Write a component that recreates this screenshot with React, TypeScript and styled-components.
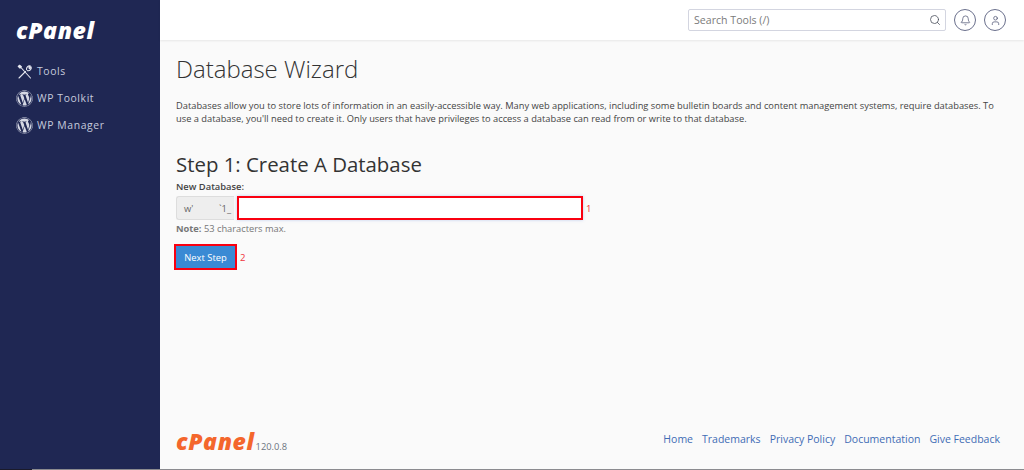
import styled, { createGlobalStyle } from "styled-components";
import { FaWordpress } from "react-icons/fa";
import { Search, Bell, User } from "lucide-react";

const GlobalStyle = createGlobalStyle`
  html, body {
    margin: 0;
    padding: 0;
    height: 100%;
    overflow: hidden;
  }
  body {
    font-family: "Open Sans", "Liberation Sans", sans-serif;
    color: #333;
  }
`;

const Page = styled.div`
  width: 1024px;
  height: 470px;
  display: flex;
  flex-direction: column;
`;
const Shell = styled.div`
  flex: 1;
  min-height: 0;
  display: flex;
`;
const ScrollBar = styled.div`
  height: 1px;
  display: flex;
  background: #8b8b8f;
  &::before {
    content: "";
    width: 32px;
    background: #1a1a2a;
  }
`;
const Sidebar = styled.nav`
  width: 160px;
  flex: none;
  background: #1f2753;
  padding: 18px 0 0 16px;
  box-sizing: border-box;
`;
const Logo = styled.div<{ $color: string }>`
  font-family: "Open Sans", sans-serif;
  font-style: italic;
  font-weight: 800;
  font-size: 23px;
  line-height: 24px;
  letter-spacing: 0.6px;
  color: ${(p) => p.$color};
`;
const NavList = styled.ul`
  list-style: none;
  margin: 19px 0 0;
  padding: 0;
  display: flex;
  flex-direction: column;
  gap: 7px;
`;
const NavItem = styled.li`
  display: flex;
  align-items: center;
  gap: 4px;
  height: 20px;
  font-size: 10.4px;
  letter-spacing: 0.6px;
  color: #c6cbdd;
  svg {
    flex: none;
  }
`;
const Main = styled.div`
  flex: 1;
  min-width: 0;
  display: flex;
  flex-direction: column;
  background: #fafafa;
`;
const Header = styled.header`
  height: 40px;
  flex: none;
  box-sizing: border-box;
  background: #fff;
  box-shadow: 0 1px 2px rgba(0, 0, 0, 0.08);
  display: flex;
  align-items: center;
  justify-content: flex-end;
  padding: 0 18px 0 0;
  gap: 8px;
`;
const SearchBox = styled.div`
  width: 258px;
  height: 22px;
  box-sizing: border-box;
  border: 1px solid #d3d5e0;
  border-radius: 2px;
  display: flex;
  align-items: center;
  justify-content: space-between;
  padding: 0 4px 0 5px;
  font-size: 10.6px;
  color: #7b7b7b;
  background: #fff;
  svg {
    color: #4a4f5c;
  }
`;
const RoundButton = styled.div`
  width: 22px;
  height: 22px;
  box-sizing: border-box;
  border: 1px solid #6a6f8c;
  border-radius: 50%;
  display: flex;
  align-items: center;
  justify-content: center;
  color: #4c5170;
`;
const Content = styled.main`
  flex: 1;
  min-height: 0;
  display: flex;
  flex-direction: column;
  padding: 13px 24px 0 16px;
`;
const PageTitle = styled.h1`
  margin: 0;
  font-size: 24px;
  line-height: 32px;
  font-weight: 300;
  color: #333;
`;
const Intro = styled.p`
  margin: 14px 0 0;
  font-size: 9.3px;
  line-height: 13px;
  color: #444;
`;
const StepTitle = styled.h2`
  margin: 26px 0 0;
  font-size: 20.4px;
  line-height: 26px;
  font-weight: 400;
  color: #333;
`;
const FieldLabel = styled.label`
  display: block;
  margin-top: 3px;
  font-size: 9.4px;
  line-height: 13px;
  font-weight: 600;
  color: #444;
`;
const FieldRow = styled.div`
  display: flex;
  align-items: center;
  margin-top: 3px;
`;
const Prefix = styled.div`
  width: 58px;
  height: 24px;
  box-sizing: border-box;
  background: #eee;
  border: 1px solid #ddd;
  border-right: 0;
  border-radius: 3px 0 0 3px;
  display: flex;
  justify-content: space-between;
  align-items: center;
  padding: 0 3px 0 7px;
  font-size: 9.4px;
  color: #666;
`;
const Callout = styled.div`
  border: 2px solid #fa0010;
  box-sizing: border-box;
  box-shadow: 0 0 3px rgba(90, 130, 220, 0.35);
`;
const NameInput = styled(Callout)`
  width: 346px;
  height: 24px;
  margin-left: 3px;
  background: #fff;
`;
const Marker = styled.span`
  margin-left: 3px;
  font-size: 9.6px;
  color: #f0333c;
`;
const Note = styled.div`
  margin-top: 2px;
  font-size: 9.3px;
  line-height: 13px;
  color: #777;
  b {
    font-weight: 700;
  }
`;
const ActionRow = styled.div`
  display: flex;
  align-items: center;
  margin: 9px 0 0 -2px;
`;
const NextButton = styled(Callout)`
  width: 63px;
  height: 26px;
  background: #3a8ad4;
  color: #fff;
  font-size: 9.4px;
  display: flex;
  align-items: center;
  justify-content: center;
  box-shadow: none;
`;
const Footer = styled.footer`
  margin-top: auto;
  height: 37px;
  display: flex;
  justify-content: space-between;
  align-items: flex-start;
`;
const Brand = styled.div`
  display: flex;
  align-items: flex-end;
  gap: 1px;
  margin-top: -3px;
`;
const Version = styled.span`
  font-size: 9.3px;
  line-height: 13px;
  color: #6b7480;
`;
const FooterLinks = styled.div`
  display: flex;
  gap: 9px;
  font-size: 10.5px;
  line-height: 15px;
  color: #3f6cb5;
`;

const ToolsIcon = () => (
  <svg width="17" height="17" viewBox="0 0 17 17" fill="none" stroke="#e4e6ef" strokeWidth="1.1" strokeLinecap="round" strokeLinejoin="round">
    <path d="M3 15 L9.5 8.5" />
    <path d="M4.5 4 L14.5 15" />
    <path d="M2.2 3.4 L3.6 2.2 L5.4 3.6 L4 5.2 Z" fill="#e4e6ef" />
    <path d="M10.6 6.8 C10 4.6 12 2.4 14.4 3 L12.8 4.8 L13.6 5.6 L15.2 4 C15.8 6.4 13.6 8.2 11.6 7.6" />
  </svg>
);

export default function App() {
  const links = ["Home", "Trademarks", "Privacy Policy", "Documentation", "Give Feedback"];
  return (
    <Page>
      <GlobalStyle />
      <Shell>
        <Sidebar>
          <Logo $color="#fff">cPanel</Logo>
          <NavList>
            <NavItem><ToolsIcon /><span>Tools</span></NavItem>
            <NavItem><FaWordpress size={17} color="#d5d8e4" /><span>WP Toolkit</span></NavItem>
            <NavItem><FaWordpress size={17} color="#d5d8e4" /><span>WP Manager</span></NavItem>
          </NavList>
        </Sidebar>
        <Main>
          <Header>
            <SearchBox>
              <span>Search Tools (/)</span>
              <Search size={12} strokeWidth={1.6} />
            </SearchBox>
            <RoundButton><Bell size={11} strokeWidth={1.6} /></RoundButton>
            <RoundButton><User size={11} strokeWidth={1.6} /></RoundButton>
          </Header>
          <Content>
            <PageTitle>Database Wizard</PageTitle>
            <Intro>
              Databases allow you to store lots of information in an easily-accessible way. Many web applications, including some bulletin boards and content management systems, require databases. To use a database, you'll need to create it. Only users that have privileges to access a database can read from or write to that database.
            </Intro>
            <StepTitle>Step 1: Create A Database</StepTitle>
            <FieldLabel>New Database:</FieldLabel>
            <FieldRow>
              <Prefix><span>w'</span><span>`1_</span></Prefix>
              <NameInput />
              <Marker>1</Marker>
            </FieldRow>
            <Note><b>Note:</b> 53 characters max.</Note>
            <ActionRow>
              <NextButton>Next Step</NextButton>
              <Marker>2</Marker>
            </ActionRow>
            <Footer>
              <Brand>
                <Logo $color="#f4662c">cPanel</Logo>
                <Version>120.0.8</Version>
              </Brand>
              <FooterLinks>
                {links.map((l) => <span key={l}>{l}</span>)}
              </FooterLinks>
            </Footer>
          </Content>
        </Main>
      </Shell>
      <ScrollBar />
    </Page>
  );
}
